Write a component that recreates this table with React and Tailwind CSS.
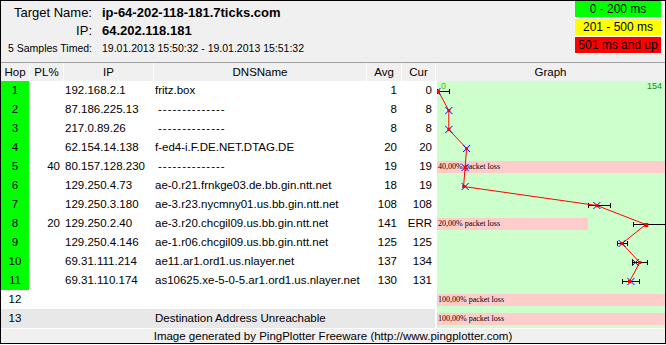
import React from "react";

const rows = [
  { hop: "1", pl: "", ip: "192.168.2.1", dns: "fritz.box", avg: "1", cur: "0", ok: true },
  { hop: "2", pl: "", ip: "87.186.225.13", dns: "--------------", dash: true, avg: "8", cur: "8", ok: true },
  { hop: "3", pl: "", ip: "217.0.89.26", dns: "--------------", dash: true, avg: "8", cur: "8", ok: true },
  { hop: "4", pl: "", ip: "62.154.14.138", dns: "f-ed4-i.F.DE.NET.DTAG.DE", avg: "20", cur: "20", ok: true },
  { hop: "5", pl: "40", ip: "80.157.128.230", dns: "--------------", dash: true, avg: "19", cur: "19", ok: true, loss: "40,00% packet loss", lossCls: "w-full" },
  { hop: "6", pl: "", ip: "129.250.4.73", dns: "ae-0.r21.frnkge03.de.bb.gin.ntt.net", avg: "18", cur: "19", ok: true },
  { hop: "7", pl: "", ip: "129.250.3.180", dns: "ae-3.r23.nycmny01.us.bb.gin.ntt.net", avg: "108", cur: "108", ok: true },
  { hop: "8", pl: "20", ip: "129.250.2.40", dns: "ae-3.r20.chcgil09.us.bb.gin.ntt.net", avg: "141", cur: "ERR", ok: true, loss: "20,00% packet loss", lossCls: "w-[151px]" },
  { hop: "9", pl: "", ip: "129.250.4.146", dns: "ae-1.r06.chcgil09.us.bb.gin.ntt.net", avg: "125", cur: "125", ok: true },
  { hop: "10", pl: "", ip: "69.31.111.214", dns: "ae11.ar1.ord1.us.nlayer.net", avg: "137", cur: "134", ok: true },
  { hop: "11", pl: "", ip: "69.31.110.174", dns: "as10625.xe-5-0-5.ar1.ord1.us.nlayer.net", avg: "130", cur: "131", ok: true },
  { hop: "12", pl: "", ip: "", dns: "", avg: "", cur: "", loss: "100,00% packet loss", lossCls: "w-full" },
  { hop: "13", pl: "", ip: "", dns: "Destination Address Unreachable", avg: "", cur: "", gray: true, loss: "100,00% packet loss", lossCls: "w-full" },
];

// graph scale: 0..154 ms over 228px
const sx = (v) => (v * 228) / 154;
const cy = (i) => i * 19 + 10;

const avgPts = [1, 8, 8, 20, 19, 18, 108, 141, 125, 137, 130];
const curPts = [0, 8, 8, 20, 19, 19, 108, null, 125, 134, 131];
const ranges = [
  [0, 0, 8.5],
  [6, 102, 117],
  [7, 133, 160],
  [8, 122, 129],
  [9, 132, 142],
  [10, 125, 137],
];

function Plot() {
  const line = avgPts.map((v, i) => `${sx(v).toFixed(1)},${cy(i) + 0.5}`).join(" ");
  return (
    <svg
      className="absolute left-[436px] top-0 pointer-events-none"
      width="228"
      height="247"
      viewBox="0 0 228 247"
    >
      {ranges.map(([i, a, b]) => (
        <g key={i} stroke="#000" strokeWidth="1" shapeRendering="crispEdges">
          <line x1={sx(a)} y1={cy(i) + 0.5} x2={sx(b)} y2={cy(i) + 0.5} />
          <line x1={sx(a)} y1={cy(i) - 2} x2={sx(a)} y2={cy(i) + 3} />
          <line x1={sx(b)} y1={cy(i) - 2} x2={sx(b)} y2={cy(i) + 3} />
        </g>
      ))}
      <polyline points={line} fill="none" stroke="#ff0000" strokeWidth="1" />
      {curPts.map((v, i) =>
        v === null ? null : (
          <g key={i} stroke="#0000ff" strokeWidth="1">
            <line x1={sx(v) - 3.5} y1={cy(i) - 3} x2={sx(v) + 3.5} y2={cy(i) + 4} />
            <line x1={sx(v) - 3.5} y1={cy(i) + 4} x2={sx(v) + 3.5} y2={cy(i) - 3} />
          </g>
        )
      )}
      {avgPts.map((v, i) => (
        <rect
          key={i}
          x={sx(v) - 1.5}
          y={cy(i) - 1}
          width={i === 7 ? 4 : 3}
          height={i === 7 ? 4 : 3}
          fill="#ff0000"
        />
      ))}
    </svg>
  );
}

export default function App() {
  return (
    <div className="w-[666px] h-[344px] border border-black bg-[#f0f0f0] flex flex-col text-black font-['Liberation_Sans',Arial,sans-serif]">
      {/* Header */}
      <div className="h-[61px] flex justify-between">
        <div className="pt-[3px] grid grid-cols-[91px_auto] gap-x-[10px] content-start">
          <div className="text-right text-[13px] leading-[18px]">Target Name:</div>
          <div className="text-[13px] leading-[18px] font-bold">ip-64-202-118-181.7ticks.com</div>
          <div className="text-right text-[13px] leading-[18px]">IP:</div>
          <div className="text-[13px] leading-[18px] font-bold">64.202.118.181</div>
          <div className="text-right text-[10.5px] leading-[16px] whitespace-nowrap">5 Samples Timed:</div>
          <div className="text-[10.5px] leading-[16px] whitespace-nowrap">
            19.01.2013 15:50:32 - 19.01.2013 15:51:32
          </div>
        </div>
        <div className="self-start flex flex-col gap-[2px] bg-white pr-[4px] pb-[1px] text-[12px] leading-[16px] text-center">
          <div className="w-[86px] h-[16px] bg-[#00ff00]">0 - 200 ms</div>
          <div className="w-[86px] h-[16px] bg-[#ffff00]">201 - 500 ms</div>
          <div className="w-[86px] h-[16px] bg-[#ff0000]">501 ms and up</div>
        </div>
      </div>

      {/* Column headers */}
      <div className="h-[19px] border-t border-[#a0a0a0] flex text-[11.5px] leading-[18px] text-center">
        <div className="w-[28px]">Hop</div>
        <div className="w-[34px] border-l border-white">PL%</div>
        <div className="w-[90px] border-l border-white">IP</div>
        <div className="w-[213px] border-l border-white">DNSName</div>
        <div className="w-[35px] border-l border-white">Avg</div>
        <div className="w-[34px] border-l border-white">Cur</div>
        <div className="flex-1 border-l border-white">Graph</div>
      </div>

      {/* Rows */}
      <div className="relative bg-white">
        {rows.map((r) => (
          <div key={r.hop} className="h-[19px] flex text-[11.5px] leading-[19px] whitespace-nowrap">
            <div className={`w-[28px] text-center ${r.ok ? "bg-[#00ff00]" : r.gray ? "bg-[#e8e8e8]" : ""}`}>
              {r.hop}
            </div>
            <div className={`flex w-[406px] ${r.gray ? "bg-[#e8e8e8]" : ""}`}>
              <div className="w-[34px] text-right pr-[3px]">{r.pl}</div>
              <div className="w-[90px] pl-[2px]">{r.ip}</div>
              <div className={`w-[213px] pl-[2px] overflow-hidden ${r.dash ? "tracking-[1px] pl-[5px]" : ""}`}>
                {r.dns}
              </div>
              <div className="w-[35px] text-right pr-[4px]">{r.avg}</div>
              <div className="w-[34px] text-right pr-[3px]">{r.cur}</div>
            </div>
            <div className="w-[2px]" />
            <div className="flex-1 bg-[#ccffcc] relative">
              {r.hop === "1" && (
                <>
                  <span className="absolute left-[4px] top-[1px] text-[9px] leading-[9px] text-[#66bb00]">0</span>
                  <span className="absolute right-[3px] top-[1px] text-[9px] leading-[9px] text-[#228822]">154</span>
                </>
              )}
              {r.loss && (
                <div
                  className={`mt-[4px] h-[12px] bg-[#ffcccc] pl-[1px] text-[8px] leading-[12px] font-['Liberation_Serif',serif] ${r.lossCls}`}
                >
                  {r.loss}
                </div>
              )}
            </div>
          </div>
        ))}
        <Plot />
      </div>

      {/* Footer */}
      <div className="h-[15px] border-t border-white text-center text-[11.5px] leading-[14px]">
        Image generated by PingPlotter Freeware (http://www.pingplotter.com)
      </div>
    </div>
  );
}
